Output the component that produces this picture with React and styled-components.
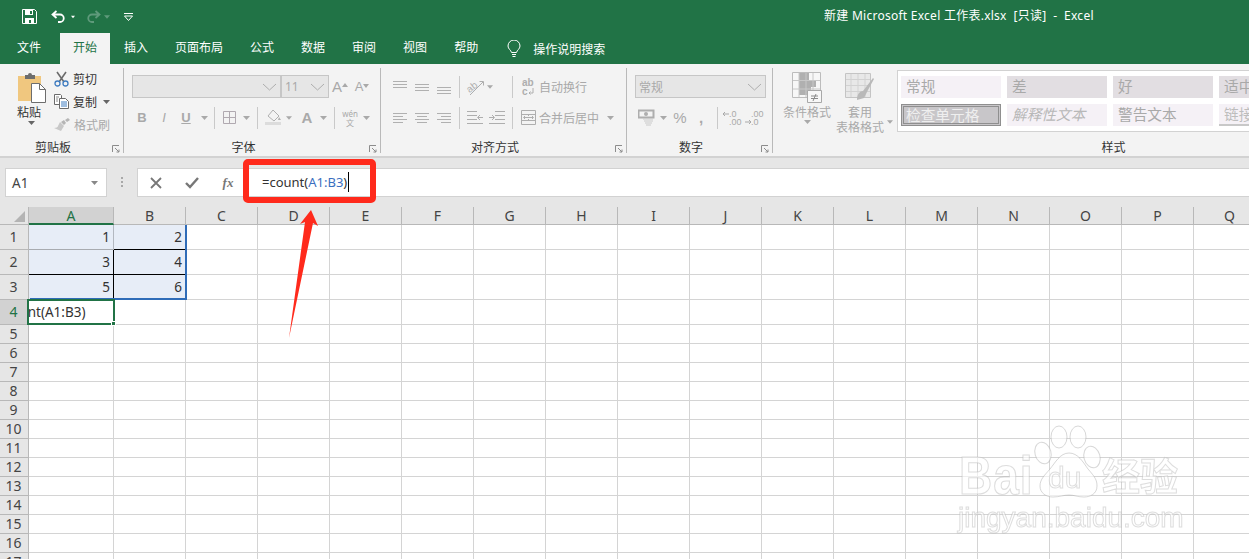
import React from 'react';
import styled, { createGlobalStyle } from 'styled-components';

const UI_FONT = '"Noto Sans", "Noto Sans CJK SC", sans-serif';
const CELL_FONT = '"Noto Sans", "Noto Sans CJK SC", sans-serif';
const GREEN = '#217346';
const OFF = '#a9a9a9';

const Global = createGlobalStyle`
  html, body { margin: 0; padding: 0; background: #fff; overflow: hidden; }
  * { box-sizing: border-box; }
`;

const Page = styled.div`
  position: relative;
  width: 1249px;
  height: 559px;
  overflow: hidden;
  display: flex;
  flex-direction: column;
  font-family: ${UI_FONT};
  font-size: 12px;
  color: #333;
`;

const TitleBar = styled.div`
  flex: none;
  height: 33px;
  background: ${GREEN};
  display: flex;
  align-items: center;
  color: #fff;
`;

const Qat = styled.div`
  flex: none;
  width: 824px;
  display: flex;
  align-items: center;
  padding-left: 21px;
`;

const QatBtn = styled.span`
  flex: none;
  width: ${(p) => p.$w}px;
  margin-left: ${(p) => p.$ml || 0}px;
  display: flex;
  justify-content: center;
  align-items: center;
`;

const Title = styled.div`
  white-space: pre;
  font-size: 12px;
  letter-spacing: 0.26px;
  padding-bottom: 4px;
`;

const TabBar = styled.div`
  flex: none;
  height: 31px;
  background: ${GREEN};
  display: flex;
  padding-left: 4px;
`;

const Tab = styled.div`
  flex: none;
  height: 31px;
  padding: 0 13px;
  margin-right: ${(p) => p.$mr || 1}px;
  line-height: 30px;
  color: ${(p) => (p.$active ? GREEN : '#fff')};
  background: ${(p) => (p.$active ? '#f3f3f3' : 'transparent')};
`;

const SearchTab = styled.div`
  display: flex;
  align-items: center;
  margin-left: 15px;
  gap: 12px;
  color: #fff;
`;

const Ribbon = styled.div`
  flex: none;
  height: 94px;
  background: #f3f3f3;
  border-bottom: 2px solid #d2d2d2;
  display: flex;
  padding-top: 4px;
`;

const Group = styled.div`
  flex: none;
  position: relative;
  width: ${(p) => p.$w}px;
  height: 85px;
  padding-left: ${(p) => p.$pl || 0}px;
  border-right: 1px solid #b9b9b9;
  display: flex;
  flex-direction: column;
`;

const GroupBody = styled.div`
  flex: none;
  height: 72px;
  display: flex;
  align-items: flex-start;
`;

const GroupLabel = styled.div`
  flex: none;
  height: 13px;
  line-height: 15px;
  text-align: center;
  color: #333;
  margin-left: -${(p) => p.$pl || 0}px;
  padding-right: ${(p) => p.$pr || 0}px;
`;

const Launcher = styled.svg`
  position: absolute;
  right: 3px;
  bottom: 0;
`;

const PasteCol = styled.div`
  flex: none;
  width: 28px;
  padding-top: 4px;
  display: flex;
  flex-direction: column;
  align-items: center;
`;

const PasteLabel = styled.div`
  line-height: 17px;
  margin: 1px 4px 0 0;
  white-space: nowrap;
  color: #333;
  font-size: 12px;
`;

const SmallCol = styled.div`
  margin-left: 9px;
  margin-top: -1px;
  display: flex;
  flex-direction: column;
`;

const SmallRow = styled.div`
  height: 23px;
  display: flex;
  align-items: center;
  gap: 4px;
  color: ${(p) => (p.$off ? OFF : '#333')};
  white-space: nowrap;
`;

const Rows = styled.div`
  display: flex;
  flex-direction: column;
  gap: 8px;
  padding-top: 7px;
`;

const Row = styled.div`
  height: 23px;
  display: flex;
  align-items: center;
  color: ${OFF};
`;

const Btn = styled.span`
  flex: none;
  width: ${(p) => p.$w}px;
  margin-left: ${(p) => p.$ml || 0}px;
  display: flex;
  align-items: center;
  justify-content: center;
`;

const BoldGlyph = styled.span`
  font-family: "Liberation Sans", sans-serif;
  font-size: ${(p) => p.$s || 12}px;
  line-height: 1.2;
  font-weight: ${(p) => (p.$b ? 700 : 400)};
  font-style: ${(p) => (p.$i ? 'italic' : 'normal')};
  text-decoration: ${(p) => (p.$u ? 'underline' : 'none')};
  color: ${OFF};
`;

const GrowMark = styled.svg`
  flex: none;
  align-self: flex-start;
  margin-top: 5px;
`;

const PinyinStack = styled.span`
  display: flex;
  flex-direction: column;
  align-items: center;
  color: ${OFF};
  font-size: 8px;
  line-height: 9px;
`;

const Sep = styled.span`
  flex: none;
  width: 1px;
  height: 22px;
  margin-left: ${(p) => p.$ml || 0}px;
  background: #c9c9c9;
`;

const Select = styled.div`
  flex: none;
  width: ${(p) => p.$w}px;
  margin-left: ${(p) => p.$ml || 0}px;
  height: 23px;
  background: #e6e6e6;
  border: 1px solid #c6c6c6;
  display: flex;
  align-items: center;
  justify-content: space-between;
  padding: 0 3px;
  color: ${OFF};
`;

const OffText = styled.span`
  color: ${OFF};
  white-space: nowrap;
  margin-left: ${(p) => p.$ml || 0}px;
`;

const BigBtn = styled.div`
  flex: none;
  width: ${(p) => p.$w}px;
  margin-left: ${(p) => p.$ml || 0}px;
  padding-top: 4px;
  display: flex;
  flex-direction: column;
  align-items: center;
  color: ${OFF};
  line-height: 15px;
  white-space: nowrap;
`;

const BigIcon = styled.span`
  height: 32px;
  display: flex;
  margin-bottom: 1px;
`;

const TailCaret = styled.span`
  flex: none;
  width: 6px;
  margin-left: 3px;
  padding-top: 52px;
  display: flex;
  justify-content: center;
`;

const Gallery = styled.div`
  flex: none;
  width: 700px;
  height: 62px;
  margin: 2px 0 0 4px;
  background: #fff;
  border: 1px solid #d2d2d2;
  padding: 5px 3px;
  display: grid;
  grid-template-columns: repeat(4, 100px);
  grid-auto-rows: 22px;
  gap: 6px;
`;

const Swatch = styled.div`
  background: ${(p) => p.$bg || '#f5f1f6'};
  color: ${(p) => p.$c || OFF};
  font-size: 14.67px;
  font-style: ${(p) => (p.$i ? 'italic' : 'normal')};
  white-space: nowrap;
  border: ${(p) => (p.$check ? '3px double #8f8f8f' : 'none')};
  border-bottom: ${(p) => (p.$line ? '2px solid #c8c8c8' : undefined)};
  line-height: ${(p) => (p.$check ? '16px' : '21px')};
  padding-left: ${(p) => (p.$check ? '2px' : '5px')};
`;

const FormulaRow = styled.div`
  flex: none;
  height: 49px;
  background: #e6e6e6;
  padding: 10px 0 0 5px;
  display: flex;
  align-items: flex-start;
`;

const NameBox = styled.div`
  flex: none;
  width: 102px;
  height: 29px;
  background: #fff;
  border: 1px solid #d2d2d2;
  padding: 0 8px 0 6px;
  display: flex;
  align-items: center;
  justify-content: space-between;
  font-family: ${CELL_FONT};
  font-size: 13.5px;
  color: #444;
`;

const Dots = styled.span`
  flex: none;
  width: 30px;
  height: 29px;
  display: flex;
  align-items: center;
  justify-content: center;
`;

const FormulaBar = styled.div`
  flex: none;
  width: 1130px;
  height: 29px;
  background: #fff;
  border: 1px solid #d2d2d2;
  display: flex;
  align-items: center;
`;

const FxBtn = styled.span`
  flex: none;
  width: 36px;
  display: flex;
  justify-content: center;
  align-items: center;
  color: #777;
`;

const FxGlyph = styled.span`
  font-family: "Liberation Serif", serif;
  font-style: italic;
  font-weight: 700;
  font-size: 13px;
  color: #777;
`;

const FormulaText = styled.div`
  margin-left: 16px;
  padding-bottom: 1px;
  font-family: ${CELL_FONT};
  font-size: 13px;
  color: #333;
  display: flex;
  align-items: center;
  white-space: pre;
`;

const RefText = styled.span`
  color: #3a6fc0;
`;

const TextCaret = styled.span`
  width: 1px;
  height: 20px;
  margin-left: 1px;
  background: #000;
`;

const Sheet = styled.div`
  flex: 1;
  position: relative;
  background: #fff;
  overflow: hidden;
  font-family: ${CELL_FONT};
`;

const HeadRow = styled.div`
  display: flex;
  height: 18px;
`;

const Corner = styled.div`
  flex: none;
  width: 29px;
  background: #e6e6e6;
  border-right: 1px solid #b8b8b8;
  border-bottom: 1px solid #b8b8b8;
  display: flex;
  align-items: flex-end;
  justify-content: flex-end;
  padding: 0 3px 2px 0;
`;

const ColHead = styled.div`
  flex: none;
  width: ${(p) => p.$w}px;
  background: ${(p) => (p.$sel ? '#d2d2d2' : '#e6e6e6')};
  color: ${(p) => (p.$sel ? GREEN : '#444')};
  border-right: 1px solid #b8b8b8;
  border-bottom: ${(p) => (p.$sel ? `2px solid ${GREEN}` : '1px solid #b8b8b8')};
  text-align: center;
  font-size: 14px;
  line-height: 18px;
`;

const GridRow = styled.div`
  display: flex;
  height: ${(p) => p.$h}px;
`;

const RowHead = styled.div`
  flex: none;
  width: 29px;
  background: ${(p) => (p.$sel ? '#d2d2d2' : '#e6e6e6')};
  color: ${(p) => (p.$sel ? GREEN : '#444')};
  border-right: 1px solid #b8b8b8;
  border-bottom: 1px solid #b8b8b8;
  text-align: center;
  font-size: 14px;
  line-height: ${(p) => p.$h - 1}px;
  padding-right: 1px;
`;

const Cell = styled.div`
  flex: none;
  width: ${(p) => p.$w}px;
  background: ${(p) => (p.$fill ? '#e7edf7' : '#fff')};
  border-right: 1px solid ${(p) => p.$rc || '#d4d4d4'};
  border-bottom: 1px solid ${(p) => p.$bc || '#d4d4d4'};
  text-align: right;
  padding-right: 3px;
  font-size: 13.5px;
  line-height: ${(p) => p.$h - 1}px;
  color: #333;
  overflow: hidden;
  white-space: nowrap;
`;

const EditCell = styled(Cell)`
  text-align: left;
  padding: 0;
  text-indent: -32px;
`;

const RangeBox = styled.div`
  position: absolute;
  left: 30px;
  top: 18px;
  width: 157px;
  height: 75px;
  border-right: 2px solid #2f6cb8;
  border-bottom: 2px solid #2f6cb8;
  pointer-events: none;
`;

const ActiveBox = styled.div`
  position: absolute;
  left: 27px;
  top: 92px;
  width: 88px;
  height: 26px;
  border: 2px solid ${GREEN};
  pointer-events: none;
`;

const FillHandle = styled.span`
  position: absolute;
  right: -3px;
  bottom: -3px;
  width: 5px;
  height: 5px;
  background: ${GREEN};
  border: 1px solid #fff;
`;

const RedFrame = styled.div`
  position: absolute;
  left: 243px;
  top: 159px;
  width: 133px;
  height: 44px;
  border: 6px solid #ff2a1c;
  border-radius: 5px;
`;

const Arrow = styled.svg`
  position: absolute;
  left: 280px;
  top: 205px;
`;

const Watermark = styled.div`
  position: absolute;
  left: 958px;
  top: 424px;
  width: 230px;
  height: 112px;
  color: rgba(255, 255, 255, 0.6);
  -webkit-text-stroke: 1px rgba(175, 175, 175, 0.42);
  font-family: "Liberation Sans", "Noto Sans CJK SC", sans-serif;
  font-weight: 700;
  filter: blur(0.4px);
`;

const MarkBai = styled.span`
  position: absolute;
  left: 1px;
  top: 27px;
  font-size: 46px;
  line-height: 50px;
  letter-spacing: 1px;
  transform: scaleY(1.15);
`;

const MarkDu = styled.span`
  position: absolute;
  left: 90px;
  top: 39px;
  font-size: 30px;
  line-height: 30px;
  font-weight: 400;
`;

const MarkCn = styled.span`
  position: absolute;
  left: 144px;
  top: 31px;
  font-size: 38px;
  line-height: 44px;
`;

const MarkUrl = styled.span`
  position: absolute;
  left: 0;
  top: 79px;
  font-size: 28px;
  line-height: 30px;
  font-weight: 400;
  white-space: nowrap;
`;

const MarkPaw = styled.svg`
  position: absolute;
  left: 75px;
  top: 0;
`;

// small drawings

const Caret = ({ c = OFF }) => (
  <svg width="7" height="4" viewBox="0 0 7 4"><path d="M0 0h7L3.5 4z" fill={c} /></svg>
);

const Chevron = () => (
  <svg width="15" height="8" viewBox="0 0 15 8" fill="none" stroke="#aeaeae"><path d="M1 1l6.5 6L14 1" /></svg>
);

const Launch = () => (
  <Launcher width="8" height="8" viewBox="0 0 8 8" fill="none" stroke="#8c8c8c">
    <path d="M.5 7V.5H7M3 3l4 4M7 4.5V7H4.5" />
  </Launcher>
);

const Lines = ({ rows, w = 14 }) => (
  <svg width={w} height="16" viewBox={`0 0 ${w} 16`} stroke="#b0b0b0" fill="none">
    {rows.map(([y, x1, x2]) => <path key={y} d={`M${x1} ${y}.5H${x2}`} />)}
  </svg>
);

const SaveIcon = () => (
  <svg width="15" height="15" viewBox="0 0 15 15">
    <path d="M.5.5h12l2 2v12H.5z" fill="none" stroke="#fff" />
    <path d="M3 1h8v5H3zM3 9h9v5H3z" fill="#fff" />
    <path d="M8 2h2v3H8zM7 11h2v3H7z" fill={GREEN} />
  </svg>
);

const UndoIcon = ({ c = '#fff', flip }) => (
  <svg width="15" height="13" viewBox="0 0 15 13" fill="none" stroke={c} strokeWidth="1.8">
    <g transform={flip ? 'translate(15 0) scale(-1 1)' : undefined}>
      <path d="M5.5 1L1.5 4.5l4 3.5M2 4.5h7a3.6 3.6 0 0 1 0 7.5H7" />
    </g>
  </svg>
);

const CustomizeIcon = () => (
  <svg width="9" height="8" viewBox="0 0 9 8">
    <path d="M0 .5h9" stroke="#fff" /><path d="M.5 3h8L4.5 7.5z" fill="none" stroke="#fff" />
  </svg>
);

const BulbIcon = () => (
  <svg width="14" height="18" viewBox="0 0 14 18" fill="none" stroke="#fff">
    <path d="M4.5 12.5C4 10 1 9 1 6a6 6 0 0 1 12 0c0 3-3 4-3.5 6.5z" />
    <path d="M5 14.5h4M5.5 16.5h3" />
  </svg>
);

const PasteIcon = () => (
  <svg width="29" height="31" viewBox="0 0 29 31">
    <path d="M1 4h23v25H1z" fill="#f0c77f" />
    <path d="M8 3h3a2 2 0 0 1 4 0h3v4H8z" fill="#6d6d6d" />
    <path d="M14.5 11.5h8l6 6v13h-14z" fill="#fff" stroke="#6d6d6d" />
    <path d="M22.5 11.5v6h6" fill="none" stroke="#6d6d6d" />
  </svg>
);

const CutIcon = () => (
  <svg width="15" height="16" viewBox="0 0 15 16" fill="none">
    <path d="M3 1l7 10M12 1L5 11" stroke="#6b6b6b" strokeWidth="1.6" />
    <circle cx="3.5" cy="12.5" r="2.5" stroke="#3f7cc0" strokeWidth="1.3" />
    <circle cx="11.5" cy="12.5" r="2.5" stroke="#3f7cc0" strokeWidth="1.3" />
  </svg>
);

const CopyIcon = () => (
  <svg width="15" height="15" viewBox="0 0 15 15" fill="none">
    <path d="M.5.5h6l1 1v9H.5z" fill="#fff" stroke="#6b6b6b" />
    <path d="M5.5 4.5h6l3 3v7h-9z" fill="#fff" stroke="#6b6b6b" />
    <path d="M7 8h6M7 10h6M7 12h6" stroke="#3f7cc0" />
    <path d="M2 3h3M2 5h2M2 7h2" stroke="#888" />
  </svg>
);

const BrushIcon = () => (
  <svg width="16" height="14" viewBox="0 0 16 14">
    <path d="M6 4l4 4-3 5-7-3c2 0 4-1 4-2z" fill="#c8c8c8" />
    <path d="M7 4l3-2 2 3-2 2zM11 2l3-2 2 2-3 2z" fill="#b5b5b5" />
  </svg>
);

const BorderIcon = () => (
  <svg width="13" height="13" viewBox="0 0 13 13" fill="none" stroke="#b0a9b0"><path d="M.5.5h12v12H.5zM6.5 1v12M1 6.5h12" /></svg>
);

const FillIcon = () => (
  <svg width="17" height="17" viewBox="0 0 17 17">
    <path d="M8 1l6 6-5 5-6-5z" fill="none" stroke="#b0b0b0" />
    <path d="M14 8l2 3h-3z" fill="#b0b0b0" />
    <path d="M0 13h16v3H0z" fill="#dcdcdc" />
  </svg>
);

const GrowFont = ({ up }) => (
  <>
    <BoldGlyph $s={up ? 15 : 13}>A</BoldGlyph>
    <GrowMark width="6" height="4" viewBox="0 0 6 4">
      <path d={up ? 'M0 4l3-4 3 4z' : 'M0 0h6L3 4z'} fill={OFF} />
    </GrowMark>
  </>
);

const OrientIcon = () => (
  <svg width="20" height="20" viewBox="0 0 20 20" fill="none" stroke="#aeaeae">
    <text x="1" y="14" fontFamily="Liberation Sans" fontSize="10" fill="#aeaeae" stroke="none" transform="rotate(-38 6 10)">ab</text>
    <path d="M5 18L18 5M14.5 4.500h4v4" />
  </svg>
);

const WrapIcon = () => (
  <svg width="14" height="19" viewBox="0 0 14 19" fill="none" stroke="#aeaeae">
    <text x="1" y="9" fontFamily="Liberation Sans" fontSize="10" fontWeight="700" fill="#aeaeae" stroke="none">ab</text>
    <text x="1" y="18" fontFamily="Liberation Sans" fontSize="10" fontWeight="700" fill="#aeaeae" stroke="none">c</text>
    <path d="M12 11v5H8M9.5 14.5L8 16l1.5 1.5" />
  </svg>
);

const MergeIcon = () => (
  <svg width="15" height="15" viewBox="0 0 15 15" fill="none" stroke="#aeaeae">
    <path d="M.5.5h14v14H.5zM1 4.5h13M1 10.5h13M3 7.5h9M4 6L2.5 7.5 4 9M11 6l1.5 1.5L11 9M7.5 5v1M7.5 9v1" />
  </svg>
);

const IndentIcon = ({ rev }) => (
  <svg width="16" height="13" viewBox="0 0 16 13" fill="none" stroke="#aeaeae">
    <g transform={rev ? 'translate(16 0) scale(-1 1)' : undefined}>
      <path d="M6 .5h10M6 4.5h10M6 8.5h10M0 12.5h16M0 6.5h5M3 4l2.5 2.5L3 9" />
    </g>
  </svg>
);

const MoneyIcon = () => (
  <svg width="17" height="17" viewBox="0 0 17 17">
    <path d="M.5 1.5h15v7H.5z" fill="none" stroke="#aeaeae" strokeWidth="2" />
    <circle cx="8" cy="5" r="2" fill="#aeaeae" />
    <path d="M5 10h10M6 12h9M7 14h7M8 16h5" stroke="#c9c9c9" />
  </svg>
);

const DecIcon = ({ rev }) => (
  <svg width="20" height="16" viewBox="0 0 20 16">
    <text x="7" y="7" fontFamily="Liberation Sans" fontSize="9" fill={OFF}>{rev ? '.00' : '.0'}</text>
    <text x="7" y="15" fontFamily="Liberation Sans" fontSize="9" fill={OFF}>{rev ? '.0' : '.00'}</text>
    <path d={rev ? 'M1 12h6M5 10l2 2-2 2' : 'M7 4H1M3 2L1 4l2 2'} fill="none" stroke={OFF} />
  </svg>
);

const CondIcon = () => (
  <svg width="30" height="31" viewBox="0 0 30 31">
    <path d="M.5.5h28v25H.5z" fill="#f7f7f7" stroke="#bcbcbc" />
    <path d="M7 1h10v7H7zM7 8h17v7H7zM7 15h12v8H7zM1 8h6v1H1z" fill="#b0b0b0" />
    <path d="M7 1v24M14 1v24M21 1v24M1 8.5h27M1 17h27" stroke="#c8c8c8" fill="none" />
    <path d="M15.5 18.5h14v12h-14z" fill="#f7f7f7" stroke="#a8a8a8" />
    <path d="M19 24h7M19 26.5h7M24 22l-3 7" stroke="#8a8a8a" fill="none" />
  </svg>
);

const TableIcon = () => (
  <svg width="30" height="29" viewBox="0 0 30 29">
    <path d="M.5 1.5h25v24H.5z" fill="#e8e8e8" stroke="#c4c4c4" />
    <path d="M6 2v23M13 2v23M20 2v23M1 7.5h24M1 13.5h24M1 19.5h24" stroke="#d2d2d2" fill="none" />
    <path d="M28 6L18 19c-3 0-6 3-6 9l7-2 4-8 6-11z" fill="#b9b9b9" />
  </svg>
);

const DotsIcon = () => (
  <svg width="3" height="11" viewBox="0 0 3 11" fill="#a8a8a8">
    <path d="M0 0h2v2H0zM0 4h2v2H0zM0 8h2v2H0z" />
  </svg>
);

const CloseIcon = () => (
  <svg width="12" height="12" viewBox="0 0 12 12" stroke="#777" strokeWidth="1.8"><path d="M1 1l10 10M11 1L1 11" /></svg>
);

const CheckIcon = () => (
  <svg width="14" height="12" viewBox="0 0 14 12" fill="none" stroke="#777" strokeWidth="2.4"><path d="M1 6l4 4 8-9" /></svg>
);

const COLS = ['A', 'B', 'C', 'D', 'E', 'F', 'G', 'H', 'I', 'J', 'K', 'L', 'M', 'N', 'O', 'P', 'Q'];
const ROWS = Array.from({ length: 17 }, (_, i) => i + 1);
const colWidth = (i) => (i === 0 ? 85 : 72);
const rowHeight = (r) => (r <= 4 ? 25 : 19);

const CELLS = {
  A1: { v: 1, fill: true, rc: '#b3b8c0', bc: '#a8abb0' },
  B1: { v: 2, fill: true, bc: '#000' },
  A2: { v: 3, fill: true, rc: '#000', bc: '#000' },
  B2: { v: 4, fill: true, bc: '#000' },
  A3: { v: 5, fill: true, rc: '#000' },
  B3: { v: 6, fill: true },
};

const SWATCHES = [
  { t: '常规' },
  { t: '差', bg: '#e2dee2' },
  { t: '好', bg: '#e2dee2' },
  { t: '适中', bg: '#e2dee2' },
  { t: '检查单元格', bg: '#c8c6c9', c: '#efefef', check: true },
  { t: '解释性文本', i: true, c: '#b8b8b8' },
  { t: '警告文本' },
  { t: '链接', line: true, c: '#bdbdbd' },
];

const TABS = ['插入', '页面布局', '公式', '数据', '审阅', '视图', '帮助'];

const Clipboard = () => (
  <Group $w={124} $pl={17}>
    <GroupBody>
      <PasteCol>
        <PasteIcon />
        <PasteLabel>粘贴</PasteLabel>
        <Caret c="#666" />
      </PasteCol>
      <SmallCol>
        <SmallRow><CutIcon /><span>剪切</span></SmallRow>
        <SmallRow><CopyIcon /><span>复制</span><Btn $w={10}><Caret c="#666" /></Btn></SmallRow>
        <SmallRow $off><BrushIcon /><span>格式刷</span></SmallRow>
      </SmallCol>
    </GroupBody>
    <GroupLabel $pl={17} $pr={17}>剪贴板</GroupLabel>
    <Launch />
  </Group>
);

const FontGroup = () => (
  <Group $w={257} $pl={7}>
    <GroupBody>
      <Rows>
        <Row>
          <Select $w={149} $ml={1}><span /><Chevron /></Select>
          <Select $w={48}><span>11</span><Chevron /></Select>
          <Btn $w={22}><GrowFont up /></Btn>
          <Btn $w={22}><GrowFont /></Btn>
        </Row>
        <Row>
          <Btn $w={22}><BoldGlyph $b $s={13}>B</BoldGlyph></Btn>
          <Btn $w={22}><BoldGlyph $i $s={13}>I</BoldGlyph></Btn>
          <Btn $w={22}><BoldGlyph $u $b $s={13}>U</BoldGlyph></Btn>
          <Btn $w={14}><Caret /></Btn>
          <Sep $ml={3} />
          <Btn $w={24} $ml={2}><BorderIcon /></Btn>
          <Btn $w={10}><Caret /></Btn>
          <Sep $ml={6} />
          <Btn $w={26} $ml={2}><FillIcon /></Btn>
          <Btn $w={6}><Caret /></Btn>
          <Btn $w={24} $ml={3}><BoldGlyph $b $s={15}>A</BoldGlyph></Btn>
          <Btn $w={8}><Caret /></Btn>
          <Sep $ml={7} />
          <Btn $w={24} $ml={3}><PinyinStack><span>wén</span><span>文</span></PinyinStack></Btn>
          <Btn $w={8}><Caret /></Btn>
        </Row>
      </Rows>
    </GroupBody>
    <GroupLabel $pl={7} $pr={17}>字体</GroupLabel>
    <Launch />
  </Group>
);

const AlignGroup = () => (
  <Group $w={246} $pl={8}>
    <GroupBody>
      <Rows>
        <Row>
          <Btn $w={22}><Lines rows={[[2, 0, 14], [5, 0, 14], [8, 0, 14]]} /></Btn>
          <Btn $w={22}><Lines rows={[[5, 0, 14], [8, 0, 14], [11, 0, 14]]} /></Btn>
          <Btn $w={22}><Lines rows={[[8, 0, 14], [11, 0, 14], [14, 0, 14]]} /></Btn>
          <Sep $ml={4} />
          <Btn $w={24} $ml={3}><OrientIcon /></Btn>
          <Btn $w={6}><Caret /></Btn>
          <Sep $ml={19} />
          <Btn $w={22} $ml={4}><WrapIcon /></Btn>
          <OffText>自动换行</OffText>
        </Row>
        <Row>
          <Btn $w={22}><Lines rows={[[3, 0, 14], [6, 0, 10], [9, 0, 14], [12, 0, 10]]} /></Btn>
          <Btn $w={22}><Lines rows={[[3, 0, 14], [6, 2, 12], [9, 0, 14], [12, 2, 12]]} /></Btn>
          <Btn $w={22}><Lines rows={[[3, 0, 14], [6, 4, 14], [9, 0, 14], [12, 4, 14]]} /></Btn>
          <Sep $ml={4} />
          <Btn $w={22} $ml={4}><IndentIcon rev /></Btn>
          <Btn $w={22}><IndentIcon /></Btn>
          <Sep $ml={4} />
          <Btn $w={22} $ml={4}><MergeIcon /></Btn>
          <OffText>合并后居中</OffText>
          <Btn $w={8} $ml={7}><Caret /></Btn>
        </Row>
      </Rows>
    </GroupBody>
    <GroupLabel $pl={8} $pr={17}>对齐方式</GroupLabel>
    <Launch />
  </Group>
);

const NumberGroup = () => (
  <Group $w={146} $pl={8}>
    <GroupBody>
      <Rows>
        <Row>
          <Select $w={131}><span>常规</span><Chevron /></Select>
        </Row>
        <Row>
          <Btn $w={22}><MoneyIcon /></Btn>
          <Btn $w={8} $ml={2}><Caret /></Btn>
          <Btn $w={26}><BoldGlyph $s={15}>%</BoldGlyph></Btn>
          <Btn $w={16}><BoldGlyph $b $s={15}>,</BoldGlyph></Btn>
          <Sep $ml={8} />
          <Btn $w={22} $ml={3}><DecIcon /></Btn>
          <Btn $w={22}><DecIcon rev /></Btn>
        </Row>
      </Rows>
    </GroupBody>
    <GroupLabel $pl={8} $pr={17}>数字</GroupLabel>
    <Launch />
  </Group>
);

const StylesGroup = () => (
  <Group $w={682} $pl={10}>
    <GroupBody>
      <BigBtn $w={48}>
        <BigIcon><CondIcon /></BigIcon>
        <span>条件格式</span>
        <Caret />
      </BigBtn>
      <BigBtn $w={48} $ml={5}>
        <BigIcon><TableIcon /></BigIcon>
        <span>套用</span>
        <span>表格格式</span>
      </BigBtn>
      <TailCaret><Caret /></TailCaret>
      <Gallery>
        {SWATCHES.map((s) => (
          <Swatch key={s.t} $bg={s.bg} $c={s.c} $i={s.i} $check={s.check} $line={s.line}>{s.t}</Swatch>
        ))}
      </Gallery>
    </GroupBody>
    <GroupLabel $pl={10}>样式</GroupLabel>
  </Group>
);

const Grid = () => (
  <Sheet>
    <HeadRow>
      <Corner>
        <svg width="11" height="11" viewBox="0 0 11 11"><path d="M11 0v11H0z" fill="#b4b4b4" /></svg>
      </Corner>
      {COLS.map((c, i) => (
        <ColHead key={c} $w={colWidth(i)} $sel={c === 'A'}>{c}</ColHead>
      ))}
    </HeadRow>
    {ROWS.map((r) => {
      const h = rowHeight(r);
      return (
        <GridRow key={r} $h={h}>
          <RowHead $h={h} $sel={r === 4}>{r}</RowHead>
          {COLS.map((c, i) => {
            const cell = CELLS[`${c}${r}`];
            if (c === 'A' && r === 4) {
              return <EditCell key={c} $w={colWidth(i)} $h={h}>=count(A1:B3)</EditCell>;
            }
            return (
              <Cell key={c} $w={colWidth(i)} $h={h} $fill={cell?.fill} $rc={cell?.rc} $bc={cell?.bc}>
                {cell?.v}
              </Cell>
            );
          })}
        </GridRow>
      );
    })}
    <RangeBox />
    <ActiveBox><FillHandle /></ActiveBox>
  </Sheet>
);

export default function App() {
  return (
    <Page>
      <Global />
      <TitleBar>
        <Qat>
          <QatBtn $w={16}><SaveIcon /></QatBtn>
          <QatBtn $w={26} $ml={8}><UndoIcon /></QatBtn>
          <QatBtn $w={4}><Caret c="#fff" /></QatBtn>
          <QatBtn $w={22} $ml={7}><UndoIcon c="#5f9a7b" flip /></QatBtn>
          <QatBtn $w={6}><Caret c="#5f9a7b" /></QatBtn>
          <QatBtn $w={24} $ml={6}><CustomizeIcon /></QatBtn>
        </Qat>
        <Title>新建 Microsoft Excel 工作表.xlsx  [只读]  -  Excel</Title>
      </TitleBar>
      <TabBar>
        <Tab $mr={6}>文件</Tab>
        <Tab $active>开始</Tab>
        {TABS.map((t) => <Tab key={t}>{t}</Tab>)}
        <SearchTab><BulbIcon /><span>操作说明搜索</span></SearchTab>
      </TabBar>
      <Ribbon>
        <Clipboard />
        <FontGroup />
        <AlignGroup />
        <NumberGroup />
        <StylesGroup />
      </Ribbon>
      <FormulaRow>
        <NameBox>A1<Caret c="#888" /></NameBox>
        <Dots><DotsIcon /></Dots>
        <FormulaBar>
          <FxBtn><CloseIcon /></FxBtn>
          <FxBtn><CheckIcon /></FxBtn>
          <FxBtn><FxGlyph>fx</FxGlyph></FxBtn>
          <FormulaText>=count(<RefText>A1:B3</RefText>)<TextCaret /></FormulaText>
        </FormulaBar>
      </FormulaRow>
      <Grid />
      <RedFrame />
      <Arrow width="40" height="136" viewBox="0 0 40 136">
        <path d="M31 5l7 16-5-3L9 133l16-116-5 2z" fill="#ff2a1c" />
      </Arrow>
      <Watermark>
        <MarkPaw width="75" height="75" viewBox="0 0 75 75" fill="rgba(255,255,255,.6)" stroke="rgba(175,175,175,.5)">
          <ellipse cx="10" cy="29" rx="8" ry="11" transform="rotate(-15 10 29)" />
          <ellipse cx="26" cy="13" rx="8" ry="11" />
          <ellipse cx="45" cy="13" rx="8" ry="11" />
          <ellipse cx="59" cy="33" rx="8" ry="11" transform="rotate(-15 59 33)" />
          <path d="M36 29c9 0 14 9 19 16 7 8 9 11 9 17 0 8-7 11-13 11-6 0-10-2-15-2-5 0-10 2-16 2-7 0-13-4-13-11 0-7 5-11 10-17 5-6 10-16 19-16z" />
        </MarkPaw>
        <MarkBai>Bai</MarkBai>
        <MarkDu>du</MarkDu>
        <MarkCn>经验</MarkCn>
        <MarkUrl>jingyan.baidu.com</MarkUrl>
      </Watermark>
    </Page>
  );
}
